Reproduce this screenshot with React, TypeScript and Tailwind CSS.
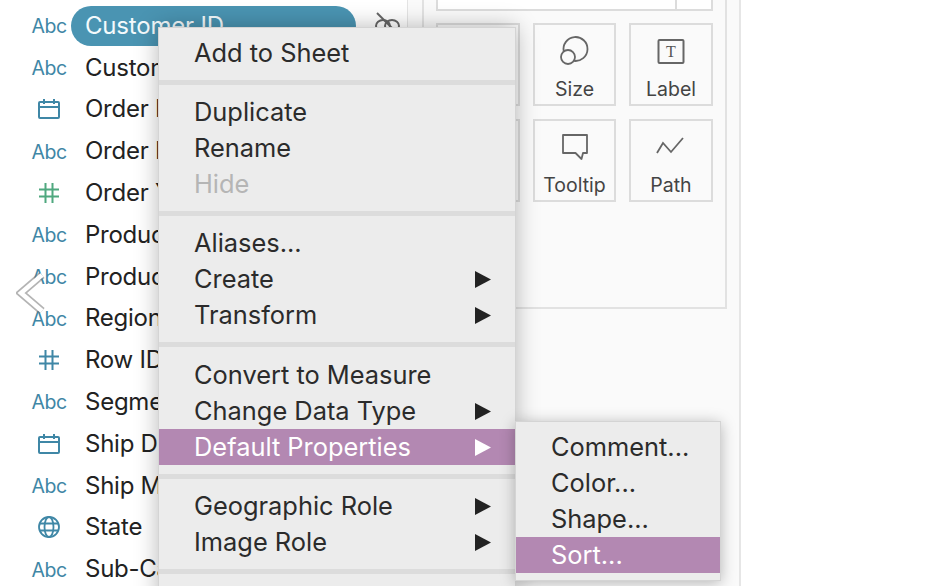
import React from 'react';

type FieldKind = 'abc' | 'date' | 'hash' | 'hashGreen' | 'globe';

const FIELDS: { name: string; kind: FieldKind }[] = [
  { name: 'Customer ID', kind: 'abc' },
  { name: 'Customer Name', kind: 'abc' },
  { name: 'Order Date', kind: 'date' },
  { name: 'Order ID', kind: 'abc' },
  { name: 'Order Year', kind: 'hashGreen' },
  { name: 'Product Category', kind: 'abc' },
  { name: 'Product Name', kind: 'abc' },
  { name: 'Region', kind: 'abc' },
  { name: 'Row ID', kind: 'hash' },
  { name: 'Segment', kind: 'abc' },
  { name: 'Ship Date', kind: 'date' },
  { name: 'Ship Mode', kind: 'abc' },
  { name: 'State', kind: 'globe' },
  { name: 'Sub-Category', kind: 'abc' },
];

const MENU_GROUPS: { label: string; arrow?: boolean; disabled?: boolean; active?: boolean }[][] = [
  [{ label: 'Add to Sheet' }],
  [{ label: 'Duplicate' }, { label: 'Rename' }, { label: 'Hide', disabled: true }],
  [{ label: 'Aliases...' }, { label: 'Create', arrow: true }, { label: 'Transform', arrow: true }],
  [
    { label: 'Convert to Measure' },
    { label: 'Change Data Type', arrow: true },
    { label: 'Default Properties', arrow: true, active: true },
  ],
  [{ label: 'Geographic Role', arrow: true }, { label: 'Image Role', arrow: true }],
];

function FieldIcon({ kind }: { kind: FieldKind }) {
  if (kind === 'abc') {
    return <span className="pt-[2px] text-[19.5px] leading-none tracking-[-0.5px] text-[#3f87a6]">Abc</span>;
  }
  if (kind === 'date') {
    return (
      <svg width="24" height="22" viewBox="0 0 24 22" fill="none" stroke="#3f87a6" strokeWidth="2">
        <rect x="2" y="4" width="20" height="16" rx="1" />
        <path d="M2 9h20M7 1v5M17 1v5" />
      </svg>
    );
  }
  if (kind === 'globe') {
    return (
      <svg width="24" height="24" viewBox="0 0 24 24" fill="none" stroke="#3f87a6" strokeWidth="1.8">
        <circle cx="12" cy="12" r="10" />
        <ellipse cx="12" cy="12" rx="4.5" ry="10" />
        <path d="M3 8.5h18M3 15.5h18" />
      </svg>
    );
  }
  const color = kind === 'hashGreen' ? '#4fa87f' : '#3f87a6';
  return (
    <svg width="22" height="22" viewBox="0 0 22 22" fill="none" stroke={color} strokeWidth="2">
      <path d="M1 7.5h20M1 14.5h20M7.5 1v20M14.5 1v20" />
    </svg>
  );
}

function MarkButton({ label, children }: { label?: string; children?: React.ReactNode }) {
  return (
    <div className="flex h-[83px] flex-col items-center border-2 border-[#dcdcdc] pb-px text-[19.5px] text-[#444]">
      <div className="flex h-[50px] items-center">{children}</div>
      {label && <span className="leading-[28px]">{label}</span>}
    </div>
  );
}

function Arrow({ white }: { white?: boolean }) {
  return (
    <svg width="16" height="17" viewBox="0 0 16 17" className="mr-6">
      <path d="M0 0l16 8.5L0 17z" fill={white ? '#fff' : '#222'} />
    </svg>
  );
}

export default function App() {
  return (
    <div
      className="relative flex h-[586px] w-[936px] overflow-hidden bg-white text-[#222]"
      style={{ fontFamily: 'Inter, "Noto Sans", sans-serif' }}
    >
      {/* field list */}
      <div className="flex h-full w-[408px] flex-col items-stretch border-r border-[#e4e4e4] pt-[5px]">
        {FIELDS.map((f, i) => (
          <div key={f.name} className="flex h-[41.8px] shrink-0 items-center">
            <div className="flex w-[71px] justify-end pr-[7px]">
              <div className="flex w-[30px] justify-center">
                <FieldIcon kind={f.kind} />
              </div>
            </div>
            {i === 0 ? (
              <div className="flex h-10 w-[285px] items-center rounded-full bg-[#4a94b2] pl-[14px] text-[24px] tracking-[-0.2px] text-[#f4fafc]">
                {f.name}
              </div>
            ) : (
              <span className="whitespace-nowrap pl-[14px] text-[24px] tracking-[-0.25px]">{f.name}</span>
            )}
            {i === 0 && (
              <svg width="28" height="28" viewBox="0 0 28 28" fill="none" stroke="#666" strokeWidth="2" className="ml-[18px]">
                <path d="M3 1l21 21" />
                <ellipse cx="9" cy="14" rx="7" ry="6" />
                <ellipse cx="18" cy="14" rx="7" ry="6" />
              </svg>
            )}
          </div>
        ))}
      </div>

      {/* marks card */}
      <div className="h-full w-[333px] border-r-2 border-[#e6e6e6] bg-[#fafafa] pl-[14px] pr-[12px]">
        <div className="h-[309px] border-x-2 border-b-2 border-[#e2e2e2] px-[12px]">
          <div className="flex h-[11px] border-x-2 border-b-2 border-[#dcdcdc] bg-white">
            <div className="flex-1 border-r-2 border-[#dcdcdc]" />
            <div className="w-[34px]" />
          </div>
          <div className="mt-[12px] grid grid-cols-[84px_83px_84px] gap-x-[13px] gap-y-[13px]">
            <MarkButton />
            <MarkButton label="Size">
              <svg width="30" height="30" viewBox="0 0 30 30" fill="none" stroke="#666" strokeWidth="1.8">
                <path d="M3.76 16.43A12 12 0 1 1 13.82 25.87" />
                <circle cx="8" cy="22" r="7" />
              </svg>
            </MarkButton>
            <MarkButton label="Label">
              <svg width="30" height="30" viewBox="0 0 30 30" fill="none">
                <rect x="2.5" y="5" width="25" height="23" rx="1" stroke="#666" strokeWidth="2" />
                <text x="15" y="22" textAnchor="middle" fontSize="16" fontFamily="Liberation Serif, serif" fill="#555">
                  T
                </text>
              </svg>
            </MarkButton>
            <MarkButton />
            <MarkButton label="Tooltip">
              <svg width="30" height="30" viewBox="0 0 30 30" fill="none" stroke="#666" strokeWidth="1.8" strokeLinejoin="round">
                <path d="M3 4H27V22H23L21.5 28L15.5 22H3Z" />
              </svg>
            </MarkButton>
            <MarkButton label="Path">
              <svg width="30" height="30" viewBox="0 0 30 30" fill="none" stroke="#666" strokeWidth="1.8">
                <path d="M1 22l6-10 8 9L27 7" />
              </svg>
            </MarkButton>
          </div>
        </div>
      </div>

      {/* previous-slide chevron */}
      <svg width="32" height="44" viewBox="0 0 32 44" fill="none" className="absolute left-[16px] top-[273px]">
        <path d="M26 2L5 20l21 18" stroke="#777" strokeWidth="8" opacity="0.55" />
        <path d="M26 2L5 20l21 18" stroke="#fff" strokeWidth="4.5" />
      </svg>

      {/* context menu */}
      <div className="absolute left-[158px] top-[27px] w-[358px] border border-[#d4d4d4] bg-[#ececec] text-[25.4px] leading-[36px] text-[#2b2b2b] shadow-[0_0_22px_rgba(0,0,0,0.28)]">
        {MENU_GROUPS.map((group, gi) => (
          <div
            key={gi}
            className={`border-b-[5px] border-[#dcdcdc] pb-[9px] ${
              gi === 0 ? 'pt-[7px]' : gi === 3 ? 'pt-[10px]' : 'pt-[9px]'
            }`}
          >
            {group.map((item) => (
              <div
                key={item.label}
                className={`flex h-[36px] items-center justify-between pl-[35px] ${
                  item.active ? 'bg-[#b388b2] text-white' : ''
                } ${item.disabled ? 'text-[#b5b5b5]' : ''}`}
              >
                <span>{item.label}</span>
                {item.arrow && <Arrow white={item.active} />}
              </div>
            ))}
          </div>
        ))}
        <div className="h-8" />
      </div>

      {/* submenu */}
      <div className="absolute left-[515px] top-[421px] w-[206px] border border-[#d4d4d4] bg-[#ececec] py-[7px] text-[25.4px] text-[#2b2b2b] shadow-[0_2px_14px_rgba(0,0,0,0.28)]">
        {['Comment...', 'Color...', 'Shape...', 'Sort...'].map((s) => (
          <div
            key={s}
            className={`flex h-[36px] items-center pl-[35px] ${s === 'Sort...' ? 'bg-[#b388b2] text-white' : ''}`}
          >
            {s}
          </div>
        ))}
      </div>
    </div>
  );
}
